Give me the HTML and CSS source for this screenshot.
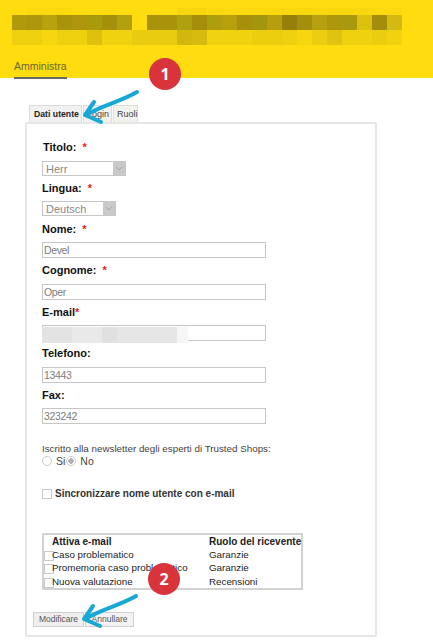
FILE: index.html
```html
<!DOCTYPE html>
<html lang="it">
<head>
    <meta charset="UTF-8">
    <meta name="viewport" content="width=device-width, initial-scale=1.0">
    <title>Amministra</title>
    <link rel="stylesheet" href="styles.css">
</head>
<body>
    <header class="header">
        <div class="blur-title">
            <div class="blur-row blur-top"></div>
            <div class="blur-row blur-dark"></div>
            <div class="blur-row blur-light"></div>
        </div>
        <nav class="nav"><a class="nav-link">Amministra</a></nav>
    </header>

    <main class="content">
        <div class="tabs">
            <span class="tab tab-active">Dati utente</span>
            <span class="tab tab-login">Login</span>
            <span class="tab tab-ruoli">Ruoli</span>
        </div>
        <form class="panel">
            <div class="field-label first">Titolo: <em>*</em></div>
            <div class="select select-titolo"><span>Herr</span><i class="select-arrow"><svg width="8" height="5" viewBox="0 0 8 5"><path d="M1 1l3 3 3-3" fill="none" stroke="#a5a5a5"/></svg></i></div>
            <div class="field-label">Lingua: <em>*</em></div>
            <div class="select select-lingua"><span>Deutsch</span><i class="select-arrow"><svg width="8" height="5" viewBox="0 0 8 5"><path d="M1 1l3 3 3-3" fill="none" stroke="#a5a5a5"/></svg></i></div>
            <div class="field-label nome">Nome: <em>*</em></div>
            <input class="text-input" type="text" value="Devel">
            <div class="field-label">Cognome: <em>*</em></div>
            <input class="text-input" type="text" value="Oper">
            <div class="field-label">E-mail<em class="tight">*</em></div>
            <div class="email-wrap">
                <input class="text-input" type="text">
                <div class="email-blur"></div>
            </div>
            <div class="field-label">Telefono:</div>
            <input class="text-input" type="text" value="13443">
            <div class="field-label">Fax:</div>
            <input class="text-input" type="text" value="323242">

            <p class="newsletter">Iscritto alla newsletter degli esperti di Trusted Shops:</p>
            <div class="radios">
                <input class="radio" type="radio" name="news"><span class="radio-text">Si</span>
                <input class="radio" type="radio" name="news" checked><span class="radio-text">No</span>
            </div>

            <label class="sync"><input class="check" type="checkbox"> Sincronizzare nome utente con e-mail</label>

            <table class="mail-table">
                <tr><th></th><th>Attiva e-mail</th><th>Ruolo del ricevente</th></tr>
                <tr><td><input class="check" type="checkbox"></td><td>Caso problematico</td><td>Garanzie</td></tr>
                <tr><td><input class="check" type="checkbox"></td><td>Promemoria caso problematico</td><td>Garanzie</td></tr>
                <tr><td><input class="check" type="checkbox"></td><td>Nuova valutazione</td><td>Recensioni</td></tr>
            </table>

            <div class="buttons">
                <button type="button" class="btn">Modificare</button>
                <button type="button" class="btn btn-cancel">Annullare</button>
            </div>
        </form>
    </main>

    <div class="badge badge-one">1</div>
    <div class="badge badge-two">2</div>
    <svg class="arrow arrow-one" width="60" height="40" viewBox="0 0 60 40"><path d="M55 3C38 13 20 16 4 26M12 13L3 26L19 33" fill="none" stroke="#17a8d6" stroke-width="4" stroke-linecap="round" stroke-linejoin="round"/></svg>
    <svg class="arrow arrow-two" width="60" height="40" viewBox="0 0 60 40"><path d="M55 3C38 13 20 16 4 26M12 13L3 26L19 33" fill="none" stroke="#17a8d6" stroke-width="4" stroke-linecap="round" stroke-linejoin="round"/></svg>
</body>
</html>
```

FILE: styles.css
```css
* {
    box-sizing: border-box;
}
html, body {
    height: 644px;
    overflow: hidden;
}
body {
    position: relative;
    margin: 0;
    background-color: #fff;
    font-family: "Liberation Sans", Arial, sans-serif;
    color: #222;
}
.header {
    height: 78px;
    padding: 8px 0 0 12px;
    background-color: #ffdc0f;
}
.blur-title {
    width: 390px;
}
.blur-row {
    height: 15px;
}
.blur-top {
    height: 7px;
    background: linear-gradient(90deg, #ffdc0f 15px, #fbd90f 15px 60px, #ffdc0f 60px 165px, #f8d60f 165px 195px, #fbd80f 195px 270px, #f9d70f 270px 360px, #fbd80f 360px);
}
.blur-dark {
    background: linear-gradient(90deg,
        #b09a0b 0 15px, #ab960c 15px 30px, #b8a20d 30px 45px, #a9930b 45px 60px, #ae950b 60px 75px, #a99a0c 75px 90px, #a4900a 90px 105px, #b3a00d 105px 120px,
        #ffdc0f 120px 135px,
        #a9930b 135px 165px, #aea00e 165px 180px, #a58e0a 180px 195px, #ae9e0e 195px 210px, #b8a00c 210px 225px, #a68f0a 225px 240px, #a3950c 240px 255px, #b59f0d 255px 270px,
        #97800a 270px 285px, #a48f0b 285px 300px, #b6a00f 300px 315px, #ac960b 315px 330px, #a8990e 330px 345px, #dcc10e 345px 360px, #a38d0b 360px 375px, #d2ba12 375px 390px);
}
.blur-light {
    background: linear-gradient(90deg,
        #efd00f 0 30px, #f7d50f 30px 45px, #efd00f 45px 75px, #dfc10d 75px 90px, #f1d20f 90px 120px, #e9cb0f 120px 165px, #d2b70e 165px 180px, #d6bc0e 180px 195px,
        #f1d20f 195px 240px, #ecce0f 240px 270px, #efd00f 270px 285px, #f7d50f 285px 300px, #eccd0f 300px 315px, #e0c30e 315px 330px, #f0d10f 330px 360px, #ebcd0f 360px 375px, #f1d20f 375px 390px);
}
.nav {
    margin: 11px 0 0 2px;
}
.nav-link {
    display: inline-block;
    height: 19px;
    border-bottom: 2px solid #6b6a5e;
    font-size: 10.5px;
    line-height: 13px;
    color: #6a6830;
}
.content {
    padding: 27px 0 0 25px;
}
.tabs {
    display: flex;
    gap: 1px;
    height: 17px;
    padding-left: 4px;
}
.tab {
    padding: 0 3px;
    border: 1px solid #dcdcdc;
    border-bottom: none;
    background-color: #f3f3ee;
    font-size: 9px;
    line-height: 16px;
    white-space: nowrap;
    color: #444;
}
.tab-active {
    width: 53px;
    padding: 0 4px;
    background-color: #f1f1f1;
    font-size: 8.7px;
    font-weight: bold;
    color: #222;
}
.tab-login {
    width: 29px;
}
.tab-ruoli {
    width: 25px;
}
.panel {
    width: 352px;
    height: 515px;
    padding: 17px 0 0 15px;
    border: 2px solid #e6e6e6;
    border-radius: 2px;
}
.field-label {
    height: 13px;
    margin-top: 6px;
    font-size: 11px;
    font-weight: bold;
    line-height: 13px;
    color: #111;
}
.field-label.first {
    margin-top: 0;
    padding-left: 1px;
}
.field-label.nome {
    margin-top: 6.5px;
}
.field-label em {
    margin-left: 3px;
    font-style: normal;
    color: #f01818;
}
.field-label em.tight {
    margin-left: 0;
}
.select {
    display: flex;
    justify-content: space-between;
    height: 15px;
    margin-top: 6.5px;
    padding-left: 3px;
    border: 1px solid #c6c6c6;
    background-color: #fff;
    font-size: 11px;
    line-height: 14px;
    color: #888;
}
.select-titolo {
    width: 84px;
}
.select-lingua {
    width: 74px;
}
.select-arrow {
    display: flex;
    align-items: center;
    justify-content: center;
    width: 12px;
    background-color: #c9c9c9;
}
.text-input {
    display: block;
    width: 224px;
    height: 16px;
    margin-top: 6.5px;
    padding: 0 1px;
    border: 1px solid #c6c6c6;
    background-color: #fff;
    font-family: "Liberation Sans", Arial, sans-serif;
    font-size: 10.5px;
    letter-spacing: -0.35px;
    color: #7c7c7c;
    outline: none;
}
.email-wrap {
    position: relative;
}
.email-blur {
    position: absolute;
    top: 2px;
    left: 0;
    width: 146px;
    height: 16px;
    background: linear-gradient(90deg, #e3e3e3 0 30px, #e9e9e9 30px 60px, #e0e0e0 60px 75px, #e6e6e6 75px 135px, #f6f6f6 135px);
}
.newsletter {
    margin: 17.5px 0 0;
    font-size: 9.8px;
    line-height: 13px;
    color: #444;
}
.radios {
    display: flex;
    align-items: center;
    height: 13px;
    font-size: 10.5px;
    color: #444;
}
.radio {
    appearance: none;
    flex: none;
    width: 10px;
    height: 10px;
    margin: 0 4px 0 0;
    border: 1px solid #c8c8c8;
    border-radius: 50%;
    background-color: #fff;
}
.radio:checked {
    background: radial-gradient(circle, #b0b0b0 0 2.5px, #fff 3px);
}
.radio-text {
    margin-right: 1px;
}
.sync {
    display: flex;
    align-items: center;
    gap: 3px;
    height: 13px;
    margin-top: 19.5px;
    font-size: 10px;
    font-weight: bold;
    color: #333;
}
.check {
    appearance: none;
    display: block;
    flex: none;
    width: 10px;
    height: 10px;
    margin: 0;
    border: 1px solid #c8c8c8;
    background-color: #fff;
}
.mail-table {
    width: 261px;
    margin-top: 32.5px;
    border: 2px solid #d2d2d2;
    border-collapse: collapse;
    table-layout: fixed;
    font-size: 9.8px;
    color: #222;
}
.mail-table th, .mail-table td {
    height: 13.5px;
    padding: 0;
    text-align: left;
    line-height: 13px;
    white-space: nowrap;
}
.mail-table th {
    font-size: 10px;
}
.mail-table th:first-child, .mail-table td:first-child {
    width: 9px;
}
.mail-table th:nth-child(2) {
    width: 157px;
}
.mail-table .check {
    margin-top: 3px;
}
.buttons {
    display: flex;
    gap: 1px;
    margin: 22px 0 0 -9px;
}
.btn {
    width: 51px;
    height: 15px;
    padding: 0;
    border: 1px solid #cfcfcf;
    background-color: #efefef;
    font-family: "Liberation Sans", Arial, sans-serif;
    font-size: 8.5px;
    color: #555;
}
.btn-cancel {
    width: 49px;
    background-color: #f3f3f3;
}
.badge {
    position: absolute;
    width: 32px;
    height: 32px;
    border-radius: 50%;
    background-color: #d9343c;
    font-family: "Open Sans", sans-serif;
    font-size: 16px;
    font-weight: bold;
    line-height: 32px;
    text-align: center;
    color: #fff;
}
.badge-one {
    top: 58px;
    left: 149px;
}
.badge-two {
    top: 563px;
    left: 148px;
}
.arrow {
    position: absolute;
}
.arrow-one {
    top: 89px;
    left: 82px;
}
.arrow-two {
    top: 593px;
    left: 81px;
}
```
